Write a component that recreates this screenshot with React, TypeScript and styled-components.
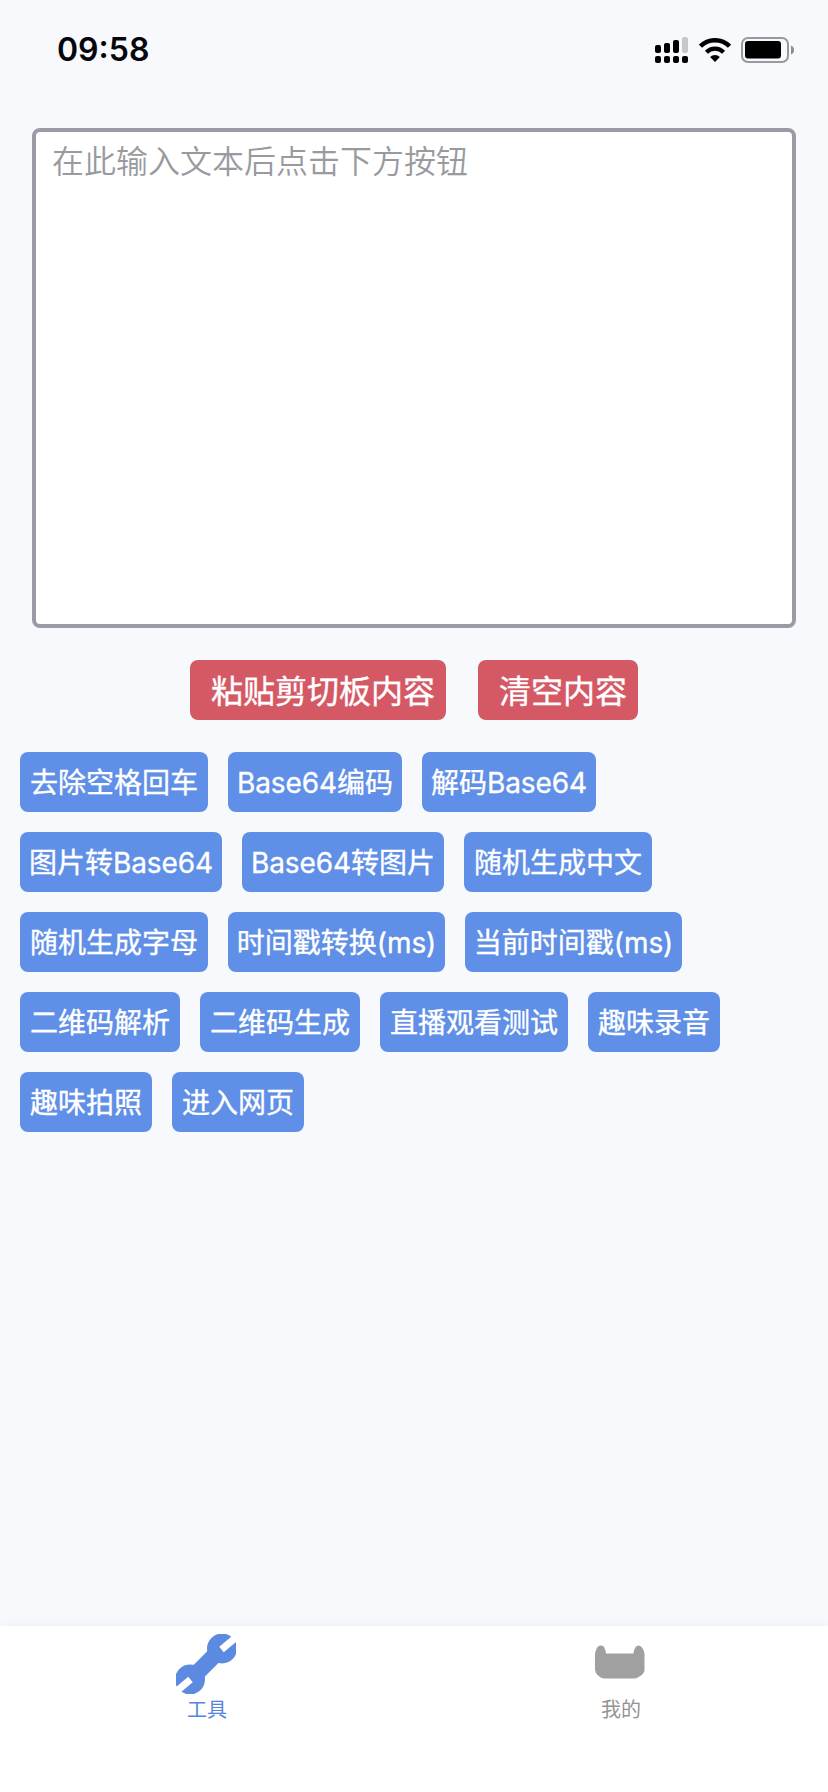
import React from "react";
import styled, { createGlobalStyle } from "styled-components";

const GlobalStyle = createGlobalStyle`
  * { box-sizing: border-box; }
  body {
    margin: 0;
    background: #f7f9fd;
    font-family: Inter, "Noto Sans CJK SC", sans-serif;
  }
`;

const Screen = styled.div`
  display: flex;
  flex-direction: column;
  width: 828px;
  height: 1792px;
  overflow: hidden;
`;

const StatusBar = styled.header`
  display: flex;
  justify-content: space-between;
  align-items: center;
  height: 100px;
  padding: 0 34px 0 57px;
`;

const Clock = styled.time`
  color: #06070b;
  font-size: 32px;
  font-weight: 600;
  line-height: 40px;
`;

const StatusIcons = styled.div`
  display: flex;
  align-items: center;
  gap: 10px;

  svg { display: block; }
`;

const InputArea = styled.textarea`
  display: block;
  flex: none;
  height: 500px;
  margin: 28px 32px 0;
  padding: 7px 16px;
  border: 4px solid #9b9ba5;
  border-radius: 8px;
  outline: none;
  resize: none;
  background: #fff;
  font-family: inherit;
  font-size: 32px;
  font-weight: 350;
  line-height: 46px;

  &::placeholder { color: #999a9e; opacity: 1; }
`;

const Button = styled.button`
  height: 60px;
  border: 0;
  border-radius: 8px;
  color: #fff;
  font-family: inherit;
  font-weight: 400;
  -webkit-text-stroke: 0.35px #fff;
  white-space: nowrap;
`;

const EditActions = styled.div`
  display: flex;
  justify-content: center;
  gap: 32px;
  margin-top: 32px;
`;

const EditButton = styled(Button)`
  padding: 0 11px 2px 21px;
  background: #d45965;
  font-size: 32px;
`;

const ToolGrid = styled.main`
  display: flex;
  flex-direction: column;
  flex: 1;
  gap: 20px;
  padding: 32px 20px 0;
`;

const ToolRow = styled.div`
  display: flex;
  gap: 20px;
`;

const ToolButton = styled(Button)<{ $width?: number }>`
  display: flex;
  align-items: center;
  justify-content: center;
  width: ${({ $width }) => ($width ? `${$width}px` : "auto")};
  padding: 0 10px 2px;
  background: #5f8fe6;
  font-size: 28px;
`;

const Latin = styled.span`
  letter-spacing: -0.1px;
`;

const TabBar = styled.nav`
  display: flex;
  height: 166px;
  background: #fff;
  box-shadow: 0 -1px 10px rgba(40, 50, 80, 0.06);
`;

const Tab = styled.a<{ $active?: boolean }>`
  display: flex;
  flex: 1;
  flex-direction: column;
  align-items: center;
  padding-top: 8px;
  color: ${({ $active }) => ($active ? "#5584dc" : "#939393")};
  font-size: 20px;
  line-height: 32px;

  svg { display: block; margin-right: 2px; }
`;

const rows: { label: string; width?: number }[][] = [
  [{ label: "去除空格回车" }, { label: "Base64编码", width: 174 }, { label: "解码Base64", width: 174 }],
  [{ label: "图片转Base64", width: 202 }, { label: "Base64转图片", width: 202 }, { label: "随机生成中文" }],
  [{ label: "随机生成字母" }, { label: "时间戳转换(ms)", width: 217 }, { label: "当前时间戳(ms)", width: 217 }],
  [{ label: "二维码解析" }, { label: "二维码生成" }, { label: "直播观看测试" }, { label: "趣味录音" }],
  [{ label: "趣味拍照" }, { label: "进入网页" }],
];

const ToolLabel = ({ text }: { text: string }) => (
  <span>
    {text
      .split(/([A-Za-z0-9()]+)/)
      .filter(Boolean)
      .map((part) => (/^[A-Za-z0-9()]/.test(part) ? <Latin key={part}>{part}</Latin> : part))}
  </span>
);

const SignalIcon = () => (
  <svg width="34" height="26" viewBox="0 0 34 26" fill="#000">
    <rect x="0" y="8" width="6" height="8" rx="2" />
    <rect x="9" y="6" width="6" height="10" rx="2" />
    <rect x="18" y="3" width="6" height="13" rx="2" />
    <rect x="27" y="0" width="6" height="16" rx="2" fill="#c6c7ca" />
    <rect x="0" y="19" width="6" height="7" rx="2" />
    <rect x="9" y="19" width="6" height="7" rx="2" />
    <rect x="18" y="19" width="6" height="7" rx="2" />
    <rect x="27" y="19" width="6" height="7" rx="2" />
  </svg>
);

const WifiIcon = () => (
  <svg width="32" height="24" viewBox="0 0 32 24" fill="none" stroke="#000">
    <path d="M1.500 8.200a20.500 20.500 0 0 1 29 0" strokeWidth="4.400" />
    <path d="M7.400 14.300a12 12 0 0 1 17.200 0" strokeWidth="4.200" />
    <path d="M11.100 19.100a7 7 0 0 1 9.800 0L16 24z" fill="#000" stroke="none" />
  </svg>
);

const BatteryIcon = () => (
  <svg width="53" height="26" viewBox="0 0 53 26">
    <rect x="1" y="1" width="46" height="24" rx="6" fill="none" stroke="#98999c" strokeWidth="2" />
    <rect x="4" y="4" width="36" height="17.500" rx="3" fill="#000" />
    <path d="M50 8.500q3 1 3 4.500t-3 4.500z" fill="#8d8e91" />
  </svg>
);

const WrenchIcon = () => (
  <svg width="60" height="60" viewBox="0 0 60 60">
    <path d="M18 42L42 18" stroke="#5b8ae0" strokeWidth="16" />
    <circle cx="46" cy="14.500" r="15" fill="#5b8ae0" />
    <circle cx="14" cy="45.500" r="15" fill="#5b8ae0" />
    <path d="M45.500 15.500L61 2.500M14.500 45.500L-1 58.500" stroke="#fff" strokeWidth="7" />
  </svg>
);

const CatIcon = () => (
  <svg width="60" height="60" viewBox="0 0 60 60">
    <path
      d="M5 20C6 14 8 11.500 11 11.500S15.500 15 16 19.500H43.500C44 15 46 11.500 48.500 11.500S54 15 54.500 20V35.500Q54.500 39 51 41.500T45 44.500H14.500Q11 44.500 8 41.500T5 35.500Z"
      fill="#a0a0a0"
    />
  </svg>
);

export default function App() {
  return (
    <Screen>
      <GlobalStyle />
      <StatusBar>
        <Clock>09:58</Clock>
        <StatusIcons>
          <SignalIcon />
          <WifiIcon />
          <BatteryIcon />
        </StatusIcons>
      </StatusBar>
      <InputArea placeholder="在此输入文本后点击下方按钮" />
      <EditActions>
        <EditButton>粘贴剪切板内容</EditButton>
        <EditButton>清空内容</EditButton>
      </EditActions>
      <ToolGrid>
        {rows.map((row, index) => (
          <ToolRow key={index}>
            {row.map(({ label, width }) => (
              <ToolButton key={label} $width={width}>
                <ToolLabel text={label} />
              </ToolButton>
            ))}
          </ToolRow>
        ))}
      </ToolGrid>
      <TabBar>
        <Tab $active>
          <WrenchIcon />
          工具
        </Tab>
        <Tab>
          <CatIcon />
          我的
        </Tab>
      </TabBar>
    </Screen>
  );
}
